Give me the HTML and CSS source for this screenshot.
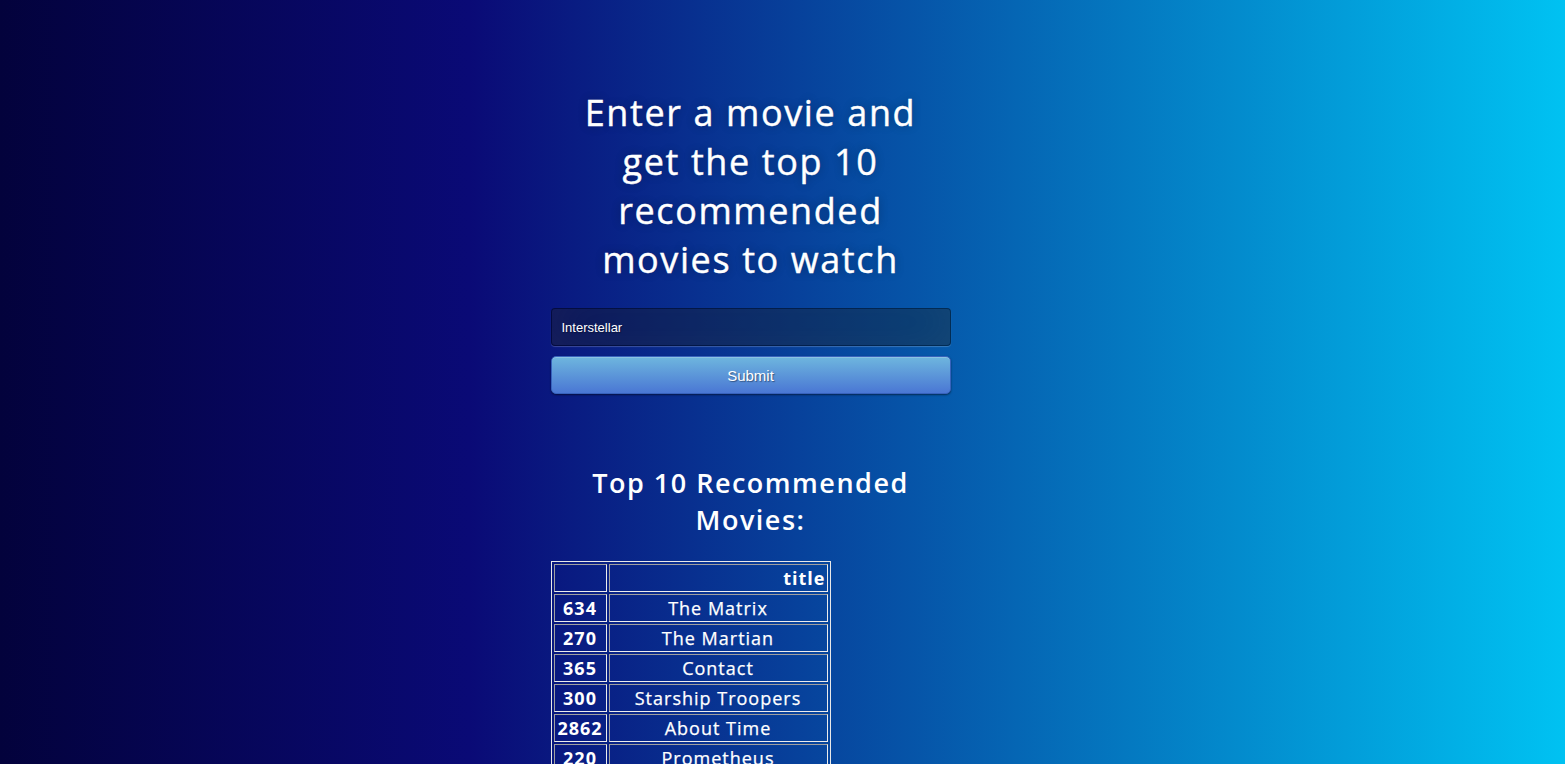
FILE: index.html
```html
<!DOCTYPE html>
<html lang="en">
<head>
<meta charset="utf-8">
<title>Movie Recommender</title>
<link rel="stylesheet" href="styles.css">
</head>
<body>
<main class="login">
  <h1 class="title">Enter a movie and get the top 10 recommended movies to watch</h1>
  <form class="search-form" onsubmit="return false;">
    <input class="movie-input" type="text" name="movie" value="Interstellar">
    <button class="btn btn-primary btn-block btn-large" type="submit">Submit</button>
  </form>
  <h2 class="subtitle">Top 10 Recommended Movies:</h2>
  <table class="results">
    <thead>
      <tr class="head-row">
        <th class="idx"></th>
        <th>title</th>
      </tr>
    </thead>
    <tbody>
      <tr><th class="idx">634</th><td>The Matrix</td></tr>
      <tr><th class="idx">270</th><td>The Martian</td></tr>
      <tr><th class="idx">365</th><td>Contact</td></tr>
      <tr><th class="idx">300</th><td>Starship Troopers</td></tr>
      <tr><th class="idx">2862</th><td>About Time</td></tr>
      <tr><th class="idx">220</th><td>Prometheus</td></tr>
      <tr><th class="idx">96</th><td>Inception</td></tr>
      <tr><th class="idx">2517</th><td>Gattaca</td></tr>
      <tr><th class="idx">1053</th><td>Moon</td></tr>
      <tr><th class="idx">3624</th><td>2001: A Space Odyssey</td></tr>
    </tbody>
  </table>
</main>
</body>
</html>
```

FILE: styles.css
```css
* {
  box-sizing: border-box;
}

html {
  min-height: 100%;
  background: linear-gradient(90deg, #03023c 0%, #0a0a76 30%, #00c2f2 100%) fixed;
}

body {
  margin: 0;
  font-family: "Open Sans", "Liberation Sans", sans-serif;
  color: #fff;
}

.login {
  width: 400px;
  margin-left: calc(50% - 232px);
  padding-top: 64px;
  padding-bottom: 40px;
}

.title {
  margin: 24px 0;
  padding: 0 24px;
  font-size: 36px;
  line-height: 49px;
  font-weight: 400;
  letter-spacing: 1.6px;
  text-align: center;
  color: #fff;
  -webkit-text-stroke: 0.4px #fff;
  text-shadow: 0 0 10px rgba(0, 0, 0, 0.3);
}

.search-form {
  margin: 0;
}

.movie-input {
  display: block;
  width: 100%;
  height: 38px;
  margin: 0 0 10px;
  padding: 10px;
  font-family: "Liberation Sans", Arial, sans-serif;
  font-size: 13px;
  line-height: 16px;
  color: #fff;
  background: rgba(0, 0, 0, 0.3);
  border: 1px solid rgba(0, 0, 0, 0.3);
  border-radius: 4px;
  outline: none;
  text-shadow: 1px 1px 1px rgba(0, 0, 0, 0.3);
  box-shadow: inset 0 -5px 45px rgba(100, 100, 100, 0.2), 0 1px 1px rgba(255, 255, 255, 0.2);
}

.btn {
  display: block;
  font-family: "Liberation Sans", Arial, sans-serif;
  color: #fff;
  cursor: pointer;
  text-align: center;
}

.btn-primary {
  background-color: #4a77d4;
  background-image: linear-gradient(to bottom, #6eb6de, #4a77d4);
  border: 1px solid #3762bc;
  text-shadow: 1px 1px 1px rgba(0, 0, 0, 0.4);
  box-shadow: inset 0 1px 0 rgba(255, 255, 255, 0.2), 0 1px 2px rgba(0, 0, 0, 0.5);
}

.btn-block {
  width: 100%;
}

.btn-large {
  height: 38px;
  padding: 10px 14px 8px;
  font-size: 15px;
  line-height: 18px;
  border-radius: 5px;
}

.subtitle {
  margin: 70px 0 23px;
  font-size: 27px;
  line-height: 37px;
  font-weight: 600;
  letter-spacing: 1.5px;
  text-align: center;
}

.results {
  width: 280px;
  border-collapse: separate;
  border-spacing: 2px;
  border: 1px solid #e8e8e8;
  font-size: 18px;
  line-height: 24px;
  letter-spacing: 1px;
  color: #fff;
}

.results th,
.results td {
  padding: 1px;
  border-style: solid;
  border-width: 1px;
  border-color: #a0a0a0 #ececec #ececec #a0a0a0;
}

.results th {
  font-weight: 700;
}

.results td {
  text-align: center;
  font-weight: 400;
  -webkit-text-stroke: 0.25px #fff;
}

.head-row th {
  text-align: right;
}

.results .idx {
  width: 53px;
  text-align: center;
  white-space: nowrap;
}
```
